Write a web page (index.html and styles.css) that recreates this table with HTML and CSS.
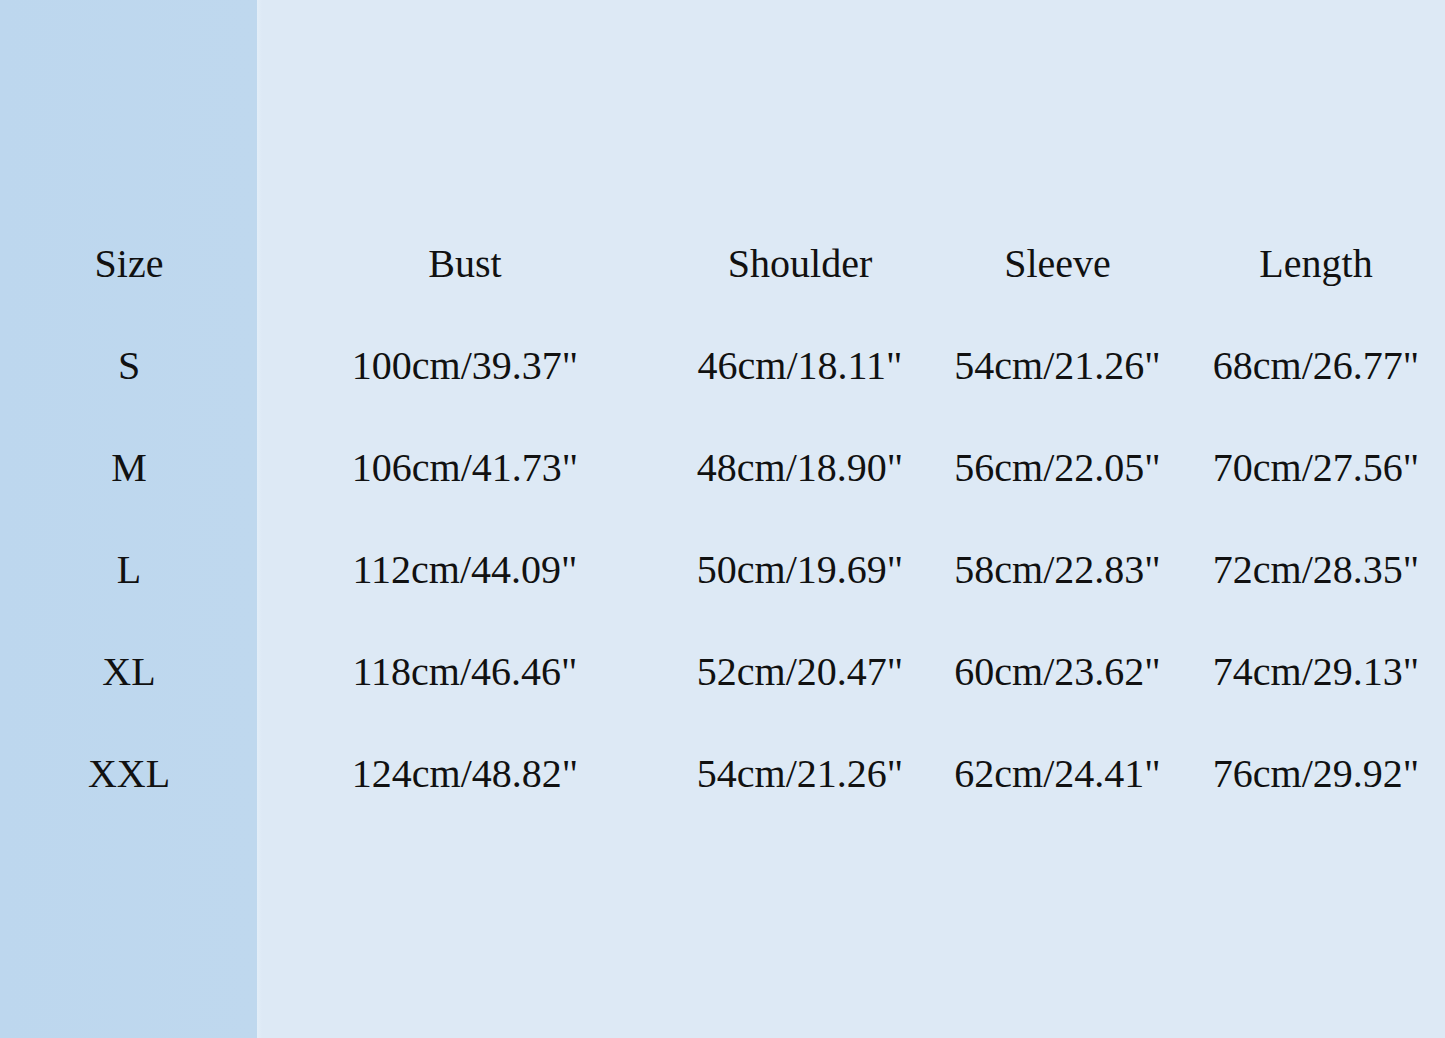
FILE: index.html
```html
<!DOCTYPE html>
<html lang="en">
<head>
<meta charset="utf-8">
<title>Size Chart</title>
<link rel="stylesheet" href="styles.css">
</head>
<body>
<div class="chart">
  <div class="grid">
    <div class="cell">Size</div><div class="cell">Bust</div><div class="cell">Shoulder</div><div class="cell">Sleeve</div><div class="cell">Length</div>
    <div class="cell">S</div><div class="cell">100cm/39.37"</div><div class="cell">46cm/18.11"</div><div class="cell">54cm/21.26"</div><div class="cell">68cm/26.77"</div>
    <div class="cell">M</div><div class="cell">106cm/41.73"</div><div class="cell">48cm/18.90"</div><div class="cell">56cm/22.05"</div><div class="cell">70cm/27.56"</div>
    <div class="cell">L</div><div class="cell">112cm/44.09"</div><div class="cell">50cm/19.69"</div><div class="cell">58cm/22.83"</div><div class="cell">72cm/28.35"</div>
    <div class="cell">XL</div><div class="cell">118cm/46.46"</div><div class="cell">52cm/20.47"</div><div class="cell">60cm/23.62"</div><div class="cell">74cm/29.13"</div>
    <div class="cell">XXL</div><div class="cell">124cm/48.82"</div><div class="cell">54cm/21.26"</div><div class="cell">62cm/24.41"</div><div class="cell">76cm/29.92"</div>
  </div>
</div>
</body>
</html>
```
FILE: styles.css
```css
html, body {
  margin: 0;
  padding: 0;
}
body {
  width: 1445px;
  height: 1038px;
  overflow: hidden;
  font-family: "Liberation Serif", "Times New Roman", serif;
  color: #111;
}
.chart {
  height: 1038px;
  box-sizing: border-box;
  padding-top: 213px;
  background: linear-gradient(to right, #bdd7ee 0, #bfd8ee 257px, #e3eef8 257px, #dde9f5 262px, #dde9f5 100%);
}
.grid {
  display: grid;
  grid-template-columns: 258px 414px 256px 259px 258px;
}
.cell {
  font-size: 40px;
  line-height: 102px;
  text-align: center;
  white-space: nowrap;
}
```
